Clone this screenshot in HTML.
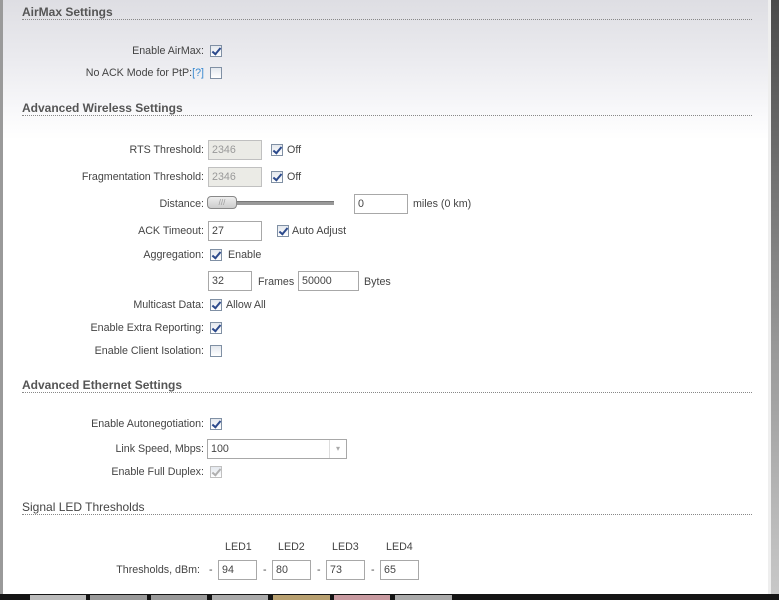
<!DOCTYPE html>
<html><head><meta charset="utf-8"><style>
*{margin:0;padding:0;box-sizing:border-box}
body{width:779px;height:600px;overflow:hidden;position:relative;font-family:"Liberation Sans",Arial,sans-serif;font-size:10.7px;color:#444;
background:linear-gradient(#dedee3 0px,#ebebef 60px,#f8f8fa 110px,#fff 140px,#fff 600px)}
.a{position:absolute;white-space:nowrap;line-height:14px;height:14px}
.l{text-align:right;width:204px;left:0}
.h{position:absolute;left:22px;font-weight:bold;font-size:12px;color:#555;line-height:14px}
.ln{position:absolute;left:22px;width:730px;height:1px;border-top:1px dotted #888}
.cb{position:absolute;width:12px;height:12px;border:1px solid #8090a4;background:linear-gradient(#e4e8ee,#fff)}
.cb.c::after{content:"";position:absolute;left:3px;top:0px;width:3px;height:7px;border:solid #2c4a8c;border-width:0 2px 2px 0;transform:rotate(40deg)}
.cb.d{border-color:#c0c0c0}
.cb.d::after{border-color:#b0b0b0}
.in{position:absolute;height:20px;border:1px solid #a8a8a8;background:#fff;padding-left:3px;line-height:18px}
.in.g{background:#ebebe6;color:#999;border-color:#c0c0c0}
</style></head><body>
<div style="position:absolute;left:0;top:0;width:3px;height:594px;background:#9a9a9a"></div>
<div style="position:absolute;left:771px;top:0;width:8px;height:594px;background:linear-gradient(#4a4a4a,#9a9a9a 60%,#c8c8c8)"></div>
<div style="position:absolute;left:768px;top:0;width:3px;height:594px;background:#eee"></div>

<div class="h" style="top:5px">AirMax Settings</div><div class="ln" style="top:19px"></div>
<div class="a l" style="top:44px">Enable AirMax:</div><div class="cb c" style="left:210px;top:45px"></div>
<div class="a l" style="top:66px">No ACK Mode for PtP:<span style="color:#3a8ad0">[?]</span></div><div class="cb" style="left:210px;top:67px"></div>

<div class="h" style="top:101px">Advanced Wireless Settings</div><div class="ln" style="top:115px"></div>
<div class="a l" style="top:143px">RTS Threshold:</div><div class="in g" style="left:208px;top:140px;width:54px">2346</div><div class="cb c" style="left:271px;top:144px"></div><div class="a" style="left:287px;top:143px">Off</div>
<div class="a l" style="top:170px">Fragmentation Threshold:</div><div class="in g" style="left:208px;top:167px;width:54px">2346</div><div class="cb c" style="left:271px;top:171px"></div><div class="a" style="left:287px;top:170px">Off</div>
<div class="a l" style="top:197px">Distance:</div>
<div style="position:absolute;left:234px;top:201px;width:100px;height:4px;background:#999;border-top:1px solid #777"></div>
<div style="position:absolute;left:207px;top:196px;width:30px;height:13px;border:1px solid #888;border-radius:4px;background:linear-gradient(#eee,#ccc);font-size:8px;color:#999;text-align:center;line-height:11px">///</div>
<div class="in" style="left:354px;top:194px;width:54px">0</div><div class="a" style="left:413px;top:197px">miles (0 km)</div>
<div class="a l" style="top:224px">ACK Timeout:</div><div class="in" style="left:208px;top:221px;width:54px">27</div><div class="cb c" style="left:277px;top:225px"></div><div class="a" style="left:292px;top:224px">Auto Adjust</div>
<div class="a l" style="top:248px">Aggregation:</div><div class="cb c" style="left:210px;top:249px"></div><div class="a" style="left:228px;top:248px">Enable</div>
<div class="in" style="left:208px;top:271px;width:44px">32</div><div class="a" style="left:258px;top:275px">Frames</div><div class="in" style="left:298px;top:271px;width:61px">50000</div><div class="a" style="left:364px;top:275px">Bytes</div>
<div class="a l" style="top:298px">Multicast Data:</div><div class="cb c" style="left:210px;top:299px"></div><div class="a" style="left:226px;top:298px">Allow All</div>
<div class="a l" style="top:321px">Enable Extra Reporting:</div><div class="cb c" style="left:210px;top:322px"></div>
<div class="a l" style="top:344px">Enable Client Isolation:</div><div class="cb" style="left:210px;top:345px"></div>

<div class="h" style="top:378px">Advanced Ethernet Settings</div><div class="ln" style="top:392px"></div>
<div class="a l" style="top:417px">Enable Autonegotiation:</div><div class="cb c" style="left:210px;top:418px"></div>
<div class="a l" style="top:442px">Link Speed, Mbps:</div><div class="in" style="left:207px;top:439px;width:140px">100<span style="position:absolute;right:0;top:0;width:17px;height:18px;border-left:1px solid #ddd;color:#aaa;text-align:center;font-size:8px">▾</span></div>
<div class="a l" style="top:465px">Enable Full Duplex:</div><div class="cb c d" style="left:210px;top:466px"></div>

<div class="h" style="top:500px;font-weight:normal;color:#444">Signal LED Thresholds</div><div class="ln" style="top:514px"></div>
<div class="a" style="left:225px;top:540px">LED1</div><div class="a" style="left:278px;top:540px">LED2</div><div class="a" style="left:332px;top:540px">LED3</div><div class="a" style="left:386px;top:540px">LED4</div>
<div class="a l" style="top:563px;width:200px">Thresholds, dBm:</div>
<div class="a" style="left:209px;top:563px">-</div><div class="in" style="left:218px;top:560px;width:39px">94</div>
<div class="a" style="left:263px;top:563px">-</div><div class="in" style="left:272px;top:560px;width:39px">80</div>
<div class="a" style="left:317px;top:563px">-</div><div class="in" style="left:326px;top:560px;width:39px">73</div>
<div class="a" style="left:371px;top:563px">-</div><div class="in" style="left:380px;top:560px;width:39px">65</div>

<div style="position:absolute;left:0;top:594px;width:779px;height:6px;background:#151515"></div>
<div style="position:absolute;left:30px;top:595px;width:56px;height:5px;background:#bbb"></div>
<div style="position:absolute;left:90px;top:595px;width:57px;height:5px;background:#999"></div>
<div style="position:absolute;left:151px;top:595px;width:56px;height:5px;background:#999"></div>
<div style="position:absolute;left:212px;top:595px;width:56px;height:5px;background:#aaa"></div>
<div style="position:absolute;left:273px;top:595px;width:57px;height:5px;background:#b8a070"></div>
<div style="position:absolute;left:334px;top:595px;width:56px;height:5px;background:#c89aa0"></div>
<div style="position:absolute;left:395px;top:595px;width:57px;height:5px;background:#aaa"></div>
</body></html>
